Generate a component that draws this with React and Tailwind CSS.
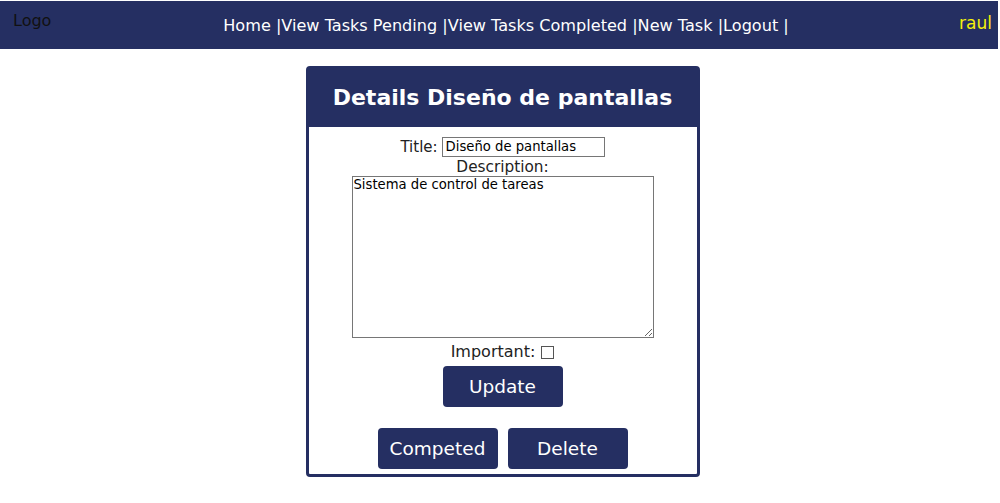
import React from "react";

export default function App() {
  const font = { fontFamily: '"DejaVu Sans", sans-serif' };
  return (
    <div className="w-[1000px] h-[503px] bg-white overflow-hidden" style={font}>
      <nav className="mt-px w-[998px] h-[48px] bg-[#252f62] flex items-start relative">
        <div className="absolute left-[13px] top-[10px] text-[16px] leading-[20px] text-[#111]">Logo</div>
        <div className="flex-1 flex justify-center pl-[14px] pt-[14px] text-[16.1px] leading-[22px] text-white">
          <span>Home |</span>
          <span>View Tasks Pending |</span>
          <span>View Tasks Completed |</span>
          <span>New Task |</span>
          <span>Logout |</span>
        </div>
        <div className="absolute right-[6px] top-[11px] text-[17px] leading-[22px] text-[#f5f10a]">raul</div>
      </nav>
      <div className="flex justify-center pl-[5px] mt-[17px]">
        <div className="w-[394px] h-[411px] border-[3px] border-[#252f62] rounded-[4px] flex flex-col items-center">
          <div className="w-full h-[58px] bg-[#252f62] flex items-center justify-center pb-[1px] text-white font-bold text-[22px]">
            Details Diseño de pantallas
          </div>
          <div className="mt-[10px] flex items-center text-[15px] leading-[20px] text-[#222]">
            <span>Title:</span>
            <input
              defaultValue="Diseño de pantallas"
              className="ml-[4px] w-[163px] h-[20px] border border-[#767676] px-[3px] text-[13.2px] text-black outline-none"
              style={font}
            />
          </div>
          <div className="pt-[1px] text-[15.3px] leading-[18px] text-[#222]">Description:</div>
          <textarea
            defaultValue="Sistema de control de tareas"
            className="w-[302px] h-[162px] border border-[#767676] px-[1px] py-0 text-[13.2px] leading-[16px] text-black outline-none"
            style={font}
          />
          <div className="mt-[4px] flex items-center text-[16px] leading-[20px] text-[#222]">
            <span>Important:</span>
            <span className="ml-[6px] w-[13px] h-[13px] border border-[#555] inline-block" />
          </div>
          <button className="mt-[4px] w-[120px] h-[41px] bg-[#252f62] text-white rounded-[4px] text-[18.5px]">Update</button>
          <div className="mt-[21px] flex gap-[10px]">
            <button className="w-[120px] h-[41px] bg-[#252f62] text-white rounded-[4px] text-[18.5px]">Competed</button>
            <button className="w-[120px] h-[41px] bg-[#252f62] text-white rounded-[4px] text-[18.5px]">Delete</button>
          </div>
        </div>
      </div>
    </div>
  );
}
